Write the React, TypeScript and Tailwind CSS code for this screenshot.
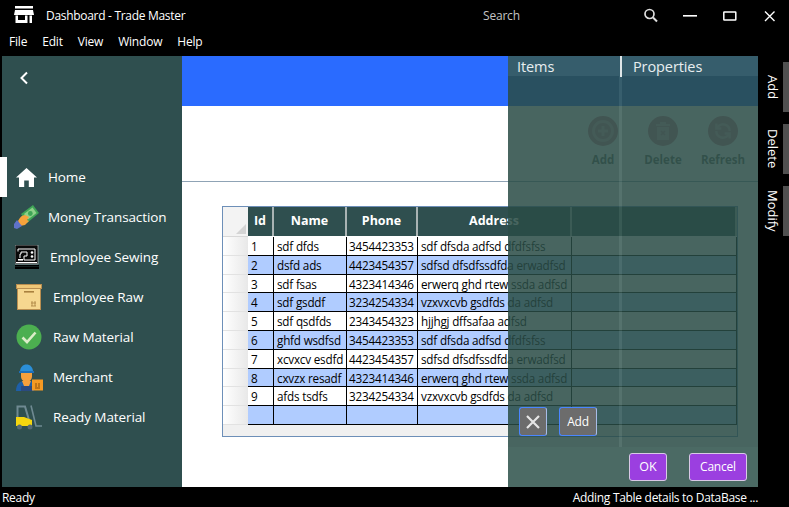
const font = { fontFamily: '"Open Sans", "Noto Sans", sans-serif' };

function Store() {
  return (
    <svg width="20" height="18" viewBox="0 0 20 18" fill="#fff">
      <rect x="1" y="0" width="18" height="2.5" />
      <path d="M1 4h18l1 5H0z" />
      <path d="M1.5 9.5h2.5V14h7V9.5h2.5V17h-12z" />
      <rect x="15.5" y="9.5" width="2.5" height="7.5" />
    </svg>
  );
}
function HomeIcon() {
  return (
    <svg width="21" height="19" viewBox="0 0 21 19" fill="#fff">
      <path d="M10.5 0 L21 9.5 H18 V19 H12.8 V12.5 H8.2 V19 H3 V9.5 H0 Z" />
    </svg>
  );
}
function MoneyIcon() {
  return (
    <svg width="25" height="24" viewBox="0 0 25 24">
      <path d="M7 9 L19 0 L25 8 L13 18Z" fill="#3fa557" />
      <path d="M10 9 L18.5 2.5 L22.5 8 L14 14.5Z" fill="#8fd18a" />
      <circle cx="16.3" cy="8.5" r="2.4" fill="#3fa557" />
      <path d="M4 16 C6 12 8 10 11 10 L15 12 L13 15 L15 16 L11 20 L6 21Z" fill="#f6a33c" />
      <path d="M0 19 L3 15 L8 21 L3 24 L0 23Z" fill="#5f72c8" />
    </svg>
  );
}
function SewingIcon() {
  return (
    <svg width="24" height="24" viewBox="0 0 24 24">
      <rect x="0" y="0" width="23" height="19" fill="#0a0a0a" stroke="#cfd8d8" strokeWidth="0.6" />
      <path d="M3 6.5 V4 H20 V15 H9 V11 H12 V7 H6 V9 H5 V13" fill="none" stroke="#fff" strokeWidth="1" />
      <rect x="3" y="14" width="5" height="1.6" fill="#fff" />
      <circle cx="17" cy="7.5" r="1.3" fill="#fff" />
      <circle cx="17" cy="11.5" r="1.3" fill="#fff" />
      <rect x="1" y="17" width="21" height="1.2" fill="#fff" />
      <rect x="0" y="20" width="24" height="1.6" fill="#000" />
      <rect x="0" y="22" width="24" height="2" fill="#000" />
    </svg>
  );
}
function BoxIcon() {
  return (
    <svg width="26" height="26" viewBox="0 0 26 26">
      <rect x="1.5" y="4" width="23" height="21.5" fill="#f6d78f" stroke="#b98e50" strokeWidth="1" />
      <rect x="0.5" y="0.5" width="25" height="4" fill="#efc777" stroke="#b98e50" strokeWidth="1" />
      <rect x="8" y="7" width="10" height="1.6" fill="#a9813f" />
      <path d="M16 17v5M19 17v5M15 19h5M15 22h5" stroke="#a9813f" strokeWidth="0.8" />
    </svg>
  );
}
function CheckIcon() {
  return (
    <svg width="26" height="26" viewBox="0 0 26 26">
      <circle cx="13" cy="13" r="12.5" fill="#4caf50" />
      <path d="M6.5 13.5 L11 18 L19.5 8.5" fill="none" stroke="#dcedc8" strokeWidth="2.6" />
    </svg>
  );
}
function MerchantIcon() {
  return (
    <svg width="27" height="27" viewBox="0 0 27 27">
      <path d="M0 27 C0 20 4 17 8 17 H14 C16 17 17 18 18 19 V27Z" fill="#1e5fa8" />
      <path d="M6 17 H15 L13 22 H8Z" fill="#f6a03c" />
      <rect x="5" y="22" width="11" height="5" fill="#2a4a80" />
      <path d="M5 8 H16 V12 C16 16 13 18 10.5 18 C8 18 5 16 5 12Z" fill="#f6a03c" />
      <path d="M4 8 C4 3 7 0.5 10.5 0.5 C14 0.5 17 3 17 8Z" fill="#2b8fd8" />
      <rect x="3" y="7" width="15" height="2" fill="#1e6fb8" />
      <rect x="16" y="15.5" width="11" height="11" fill="#f59a23" />
      <path d="M20 19v4M23 19v4M19 24h5" stroke="#8a4e0a" strokeWidth="1" />
    </svg>
  );
}
function ForkliftIcon() {
  return (
    <svg width="26" height="25" viewBox="0 0 26 25">
      <path d="M1.5 13 V1.5 H9 L13 15" fill="none" stroke="#6f8a92" strokeWidth="2" />
      <path d="M15 0.5 L20 21 H26" fill="none" stroke="#6f8a92" strokeWidth="1.6" />
      <path d="M0 12 H8 L16 15 V21 H0Z" fill="#f5d60f" />
      <circle cx="3.5" cy="22" r="2.5" fill="#566a72" />
      <circle cx="14" cy="22" r="2.5" fill="#566a72" />
    </svg>
  );
}

const navItems = [
  { label: 'Home', icon: <HomeIcon />, iconCls: 'ml-[14px] w-[32px]', active: true },
  { label: 'Money Transaction', icon: <MoneyIcon />, iconCls: 'ml-[12px] w-[34px]' },
  { label: 'Employee Sewing', icon: <SewingIcon />, iconCls: 'ml-[13px] w-[35px]' },
  { label: 'Employee Raw', icon: <BoxIcon />, iconCls: 'ml-[14px] w-[37px]' },
  { label: 'Raw Material', icon: <CheckIcon />, iconCls: 'ml-[14px] w-[37px]' },
  { label: 'Merchant', icon: <MerchantIcon />, iconCls: 'ml-[14px] w-[37px]' },
  { label: 'Ready Material', icon: <ForkliftIcon />, iconCls: 'ml-[14px] w-[37px]' },
];

const rows = [
  ['1', 'sdf dfds', '3454423353', 'sdf dfsda adfsd dfdfsfss'],
  ['2', 'dsfd ads', '4423454357', 'sdfsd dfsdfssdfda erwadfsd'],
  ['3', 'sdf fsas', '4323414346', 'erwerq ghd rtew ssda adfsd'],
  ['4', 'sdf gsddf', '3234254334', 'vzxvxcvb gsdfds da adfsd'],
  ['5', 'sdf qsdfds', '2343454323', 'hjjhgj dffsafaa adfsd'],
  ['6', 'ghfd wsdfsd', '3454423353', 'sdf dfsda adfsd dfdfsfss'],
  ['7', 'xcvxcv esdfd', '4423454357', 'sdfsd dfsdfssdfda erwadfsd'],
  ['8', 'cxvzx resadf', '4323414346', 'erwerq ghd rtew ssda adfsd'],
  ['9', 'afds tsdfs', '3234254334', 'vzxvxcvb gsdfds da adfsd'],
  ['', '', '', ''],
];

function DataTable() {
  return (
    <div className="w-[516px] h-[231px] border border-[#6d8fb8] bg-[#f0f0f0] flex flex-col">
      <div className="flex h-[30px] shrink-0 bg-white">
        <div className="w-[25px] bg-[#f3f3f3] relative border-b border-[#d8d8d8]">
          <div className="absolute right-[2px] bottom-[2px] w-0 h-0 border-l-[10px] border-l-transparent border-b-[10px] border-b-[#d4d4d4]" />
        </div>
        {[['Id', 'w-[26px]'], ['Name', 'w-[73px]'], ['Phone', 'w-[71px]'], ['Address', 'w-[154px]'], ['', 'w-[165px]']].map(([h, w], i) => (
          <div key={i} className={`${w} h-[29px] bg-[#2f4f4f] text-white font-bold text-[12.5px] flex items-center justify-center border-r-2 border-[#a9b3b3]`}>
            {h}
          </div>
        ))}
      </div>
      {rows.map((r, i) => (
        <div key={i} className="flex h-[18.8px] shrink-0 text-[11.7px] tracking-[-0.2px] leading-[18px] text-black">
          <div className="w-[25px] bg-gradient-to-r from-white to-[#e8e8e8] border-b border-[#e2e2e2]" />
          <div className={`flex flex-1 border-b border-black ${i % 2 === 1 ? 'bg-[#b0ccff]' : 'bg-white'}`}>
            <div className="w-[26px] border-r border-black pl-[3px] whitespace-nowrap overflow-hidden">{r[0]}</div>
            <div className="w-[73px] border-r border-black pl-[3px] whitespace-nowrap overflow-hidden">{r[1]}</div>
            <div className="w-[71px] border-r border-black pl-[2px] whitespace-nowrap overflow-hidden">{r[2]}</div>
            <div className="w-[154px] border-r border-black pl-[3px] whitespace-nowrap overflow-hidden">{r[3]}</div>
            <div className="w-[165px] border-r border-black" />
          </div>
        </div>
      ))}
    </div>
  );
}

function ToolButton({ label, children }: { label: string; children: React.ReactNode }) {
  return (
    <div className="w-[60px] flex flex-col items-center">
      <div className="w-[30px] h-[30px] rounded-full bg-[#d08aa0] flex items-center justify-center">{children}</div>
      <div className="mt-[6px] text-[11.5px] leading-[16px] font-bold text-[#6e6e6e]">{label}</div>
    </div>
  );
}

function SideTab({ label }: { label: string }) {
  return (
    <div className="h-[50px] flex justify-end items-center">
      <span className="[writing-mode:vertical-rl] text-[13px] leading-[14px] text-white mr-[3px]">{label}</span>
      <div className="w-[6px] h-full bg-[#505050]" />
    </div>
  );
}

export default function App() {
  return (
    <div style={font} className="w-[789px] h-[507px] bg-black flex flex-col overflow-hidden">
      <header className="h-[56px] shrink-0 text-white relative">
        <div className="h-[31px] flex items-center">
          <div className="ml-[14px] mr-[12px] mt-[-2px]"><Store /></div>
          <span className="text-[12px] tracking-[-0.3px] mt-[1px]">Dashboard - Trade Master</span>
          <span className="absolute left-[483px] top-[7px] text-[12px] tracking-[-0.2px] text-[#c4c4c4]">Search</span>
          <div className="absolute right-0 top-0 h-[31px]">
            <svg width="150" height="31" viewBox="0 0 150 31" className="block">
              <circle cx="10.5" cy="14" r="4.5" fill="none" stroke="#ddd" strokeWidth="1.7" />
              <path d="M14 17.5 L18 21.5" stroke="#ddd" strokeWidth="2" />
              <rect x="44" y="15" width="14" height="1.6" fill="#fff" />
              <rect x="84.8" y="12" width="12" height="8" fill="none" stroke="#fff" strokeWidth="1.5" rx="0.5" />
              <path d="M126 11.5 L135.5 21 M135.5 11.5 L126 21" stroke="#fff" strokeWidth="1.4" />
            </svg>
          </div>
        </div>
        <nav className="flex text-[12px] tracking-[-0.2px] pl-[9px] gap-[15px] h-[22px] items-center">
          <span>File</span><span>Edit</span><span>View</span><span>Window</span><span>Help</span>
        </nav>
      </header>
      <div className="flex-1 flex min-h-0 pl-[2px]">
        <aside className="w-[180px] bg-[#2f4f4f] shrink-0 flex flex-col text-white">
          <div className="h-[44px] shrink-0 pl-[16px] pt-[15px]">
            <svg width="12" height="14" viewBox="0 0 12 14"><path d="M9 1.5 L3.5 7 L9 12.5" fill="none" stroke="#fff" strokeWidth="2" /></svg>
          </div>
          <div className="h-[57px] shrink-0" />
          {navItems.map((n) => (
            <div key={n.label} className="h-[40px] shrink-0 flex items-center text-[13.5px] tracking-[-0.1px] relative">
              {n.active && <div className="absolute left-[-2px] top-0 w-[7px] h-[40px] bg-white" />}
              <div className={`${n.iconCls} shrink-0 flex items-center`}>{n.icon}</div>
              <span>{n.label}</span>
            </div>
          ))}
        </aside>
        <main className="flex-1 bg-white relative min-w-0 flex flex-col">
          <div className="h-[50px] bg-[#2a6bff] shrink-0" />
          <div className="h-[76px] shrink-0 border-b border-[#8fa3b5] flex justify-end items-start pt-[10px] pr-[5px]">
            <ToolButton label="Add">
              <svg width="24" height="24" viewBox="0 0 24 24" fill="none" stroke="#fff" strokeWidth="3" opacity="0.35"><circle cx="12" cy="12" r="9.5" /><path d="M12 7v10M7 12h10" /></svg>
            </ToolButton>
            <ToolButton label="Delete">
              <svg width="16" height="20" viewBox="0 0 16 20" opacity="0.35"><path d="M1 3h14v2H1zM5 1h6v2H5zM2 6h12v13H2z" fill="#fff" /><path d="M6 10l4 4M10 10l-4 4" stroke="#d08aa0" strokeWidth="1.5" /></svg>
            </ToolButton>
            <ToolButton label="Refresh">
              <svg width="20" height="20" viewBox="0 0 24 24" fill="none" stroke="#fff" strokeWidth="3" opacity="0.35"><path d="M20 12a8 8 0 0 0-14-5.3L4 9M4 12a8 8 0 0 0 14 5.3L20 15" /><path d="M4 3v6h6M20 21v-6h-6" /></svg>
            </ToolButton>
          </div>
          <div className="pl-[40px] pt-[24px]"><DataTable /></div>

          <div className="absolute left-[326px] right-0 top-0 bottom-0 bg-[#2c5049]/[0.85] flex flex-col">
            <div className="h-[20px] shrink-0 flex bg-white/[0.05] text-[14.5px] tracking-[-0.1px] text-[#e8eef0]">
              <div className="w-[112px] pl-[9px] leading-[21px]">Items</div>
              <div className="w-[2px] h-[21px] bg-[#dfe6e8]" />
              <div className="pl-[11px] leading-[21px]">Properties</div>
            </div>
            <div className="flex-1 flex min-h-0">
              <div className="w-[111px] bg-black/[0.04] flex items-end gap-[12px] pl-[11px] pb-[11px]">
                <button className="w-[28px] h-[29px] rounded-[3px] bg-[#6c6c6c] border border-[#4a86ff] border-r-[#a8bce8] flex items-center justify-center shrink-0">
                  <svg width="16" height="16" viewBox="0 0 16 16"><path d="M2 2 L14 14 M14 2 L2 14" stroke="#e6e6e6" strokeWidth="2.2" /></svg>
                </button>
                <button className="w-[38px] h-[29px] rounded-[3px] bg-[#6c6c6c] border border-[#4a86ff] border-r-[#a8bce8] text-[12px] tracking-[-0.2px] text-white shrink-0">Add</button>
              </div>
              <div className="w-[3px] bg-white/[0.06]" />
              <div className="flex-1 bg-black/[0.04]" />
            </div>
            <div className="h-[40px] shrink-0 flex justify-end items-start gap-[22px] pt-[6px] pr-[11px]">
              <button className="w-[38px] h-[28px] rounded-[3px] bg-[#9b3fe0] border border-[#d9c9e6] text-[12.5px] text-white">OK</button>
              <button className="w-[58px] h-[28px] rounded-[3px] bg-[#9b3fe0] border border-[#d9c9e6] text-[12px] tracking-[-0.2px] text-white">Cancel</button>
            </div>
          </div>
        </main>
        <div className="w-[31px] shrink-0 flex flex-col gap-[12px] pt-[6px]">
          <SideTab label="Add" />
          <SideTab label="Delete" />
          <SideTab label="Modify" />
        </div>
      </div>
      <footer className="h-[20px] shrink-0 flex justify-between text-white text-[12px] tracking-[-0.3px] leading-[22px] pl-[2px] pr-[31px]">
        <span>Ready</span>
        <span>Adding Table details to DataBase ...</span>
      </footer>
    </div>
  );
}
